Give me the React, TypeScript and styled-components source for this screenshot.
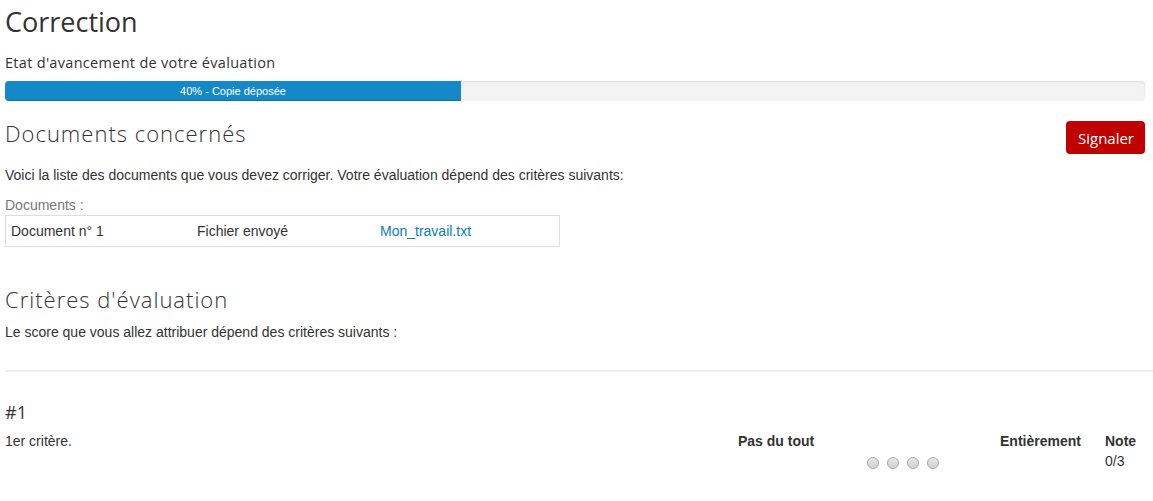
import React from "react";
import styled, { createGlobalStyle } from "styled-components";

const Global = createGlobalStyle`
  html, body { margin: 0; padding: 0; background: #fff; }
  body { font-family: "Liberation Sans", Arial, sans-serif; font-size: 14px; color: #333; }
`;

const heading = `"Open Sans", "Lato", sans-serif`;

const Page = styled.div`
  padding: 0 8px 0 5px;
  overflow: hidden;
`;

const Title = styled.h1`
  font-family: ${heading};
  font-weight: 400;
  font-size: 27px;
  line-height: 32px;
  margin: 6px 0 0;
  color: #333;
`;

const Label = styled.div`
  font-family: ${heading};
  font-size: 14.5px;
  letter-spacing: 0.3px;
  line-height: 18px;
  margin-top: 16px;
  color: #333;
`;

const Progress = styled.div`
  margin-top: 9px;
  height: 20px;
  border-radius: 4px;
  background: #f3f3f3;
  box-shadow: inset 0 1px 2px rgba(0, 0, 0, 0.1);
  overflow: hidden;
`;

const Fill = styled.div`
  height: 100%;
  background: #1589c8;
  box-shadow: inset 0 -1px 0 rgba(0, 0, 0, 0.15);
  color: #fff;
  font-size: 11px;
  line-height: 20px;
  text-align: center;
  font-family: "Liberation Sans", Arial, sans-serif;
`;

const SectionHead = styled.div`
  display: flex;
  justify-content: space-between;
  align-items: flex-start;
  margin-top: 20px;
`;

const H2 = styled.h2<{ $top?: number }>`
  font-family: ${heading};
  font-weight: 300;
  font-size: 22px;
  letter-spacing: 1px;
  line-height: 25px;
  margin: ${(p) => p.$top ?? 0}px 0 0;
  color: #333;
`;

const Button = styled.button`
  background: #c00000;
  color: #fff;
  border: none;
  border-radius: 4px;
  font-family: ${heading};
  font-size: 15px;
  height: 33px;
  padding: 0 11px 0 12px;
  margin-top: 0;
`;

const Para = styled.p<{ $top: number }>`
  margin: ${(p) => p.$top}px 0 0;
  line-height: 20px;
`;

const Muted = styled.div`
  color: #777;
  margin-top: 10px;
  line-height: 20px;
`;

const DocTable = styled.div`
  display: grid;
  grid-template-columns: 186px 183px 1fr;
  width: 555px;
  border: 1px solid #ddd;
  height: 32px;
  box-sizing: border-box;
  align-items: center;
`;

const Cell = styled.div`
  padding: 0 5px;
`;

const Link = styled.a`
  color: #0a7cc4;
  text-decoration: none;
`;

const Rule = styled.hr`
  border: none;
  border-top: 2px solid #eee;
  margin: 28px -8px 0 0;
`;

const Num = styled.div`
  font-family: ${heading};
  font-weight: 400;
  font-size: 18px;
  line-height: 22px;
  margin-top: 29px;
`;

const Criterion = styled.div`
  display: grid;
  grid-template-columns: 728px 262px 105px 1fr;
  margin-top: 8px;
  line-height: 20px;
`;

const Head = styled.div`
  font-weight: 700;
  padding-left: 5px;
`;

const Radios = styled.div`
  grid-column: 2 / 4;
  display: flex;
  gap: 8px;
  padding-left: 134px;
  padding-top: 6px;
`;

const Radio = styled.span`
  width: 12px;
  height: 12px;
  border-radius: 50%;
  box-sizing: border-box;
  border: 1px solid #a8a8a8;
  background: linear-gradient(#e6e6e6, #d2d2d2);
`;

const Score = styled.div`
  padding-left: 5px;
`;

export default function App() {
  return (
    <Page>
      <Global />
      <Title>Correction</Title>
      <Label>Etat d'avancement de votre évaluation</Label>
      <Progress>
        <Fill style={{ width: "40%" }}>40% - Copie déposée</Fill>
      </Progress>
      <SectionHead>
        <H2 $top={0}>Documents concernés</H2>
        <Button>Signaler</Button>
      </SectionHead>
      <Para $top={11}>
        Voici la liste des documents que vous devez corriger. Votre évaluation dépend des critères suivants:
      </Para>
      <Muted>Documents :</Muted>
      <DocTable>
        <Cell>Document n° 1</Cell>
        <Cell>Fichier envoyé</Cell>
        <Cell>
          <Link href="#">Mon_travail.txt</Link>
        </Cell>
      </DocTable>
      <H2 $top={40}>Critères d'évaluation</H2>
      <Para $top={10}>Le score que vous allez attribuer dépend des critères suivants :</Para>
      <Rule />
      <Num>#1</Num>
      <Criterion>
        <div>1er critère.</div>
        <Head>Pas du tout</Head>
        <Head>Entièrement</Head>
        <Head>Note</Head>
        <div />
        <Radios>
          <Radio />
          <Radio />
          <Radio />
          <Radio />
        </Radios>
        <Score>0/3</Score>
      </Criterion>
    </Page>
  );
}
